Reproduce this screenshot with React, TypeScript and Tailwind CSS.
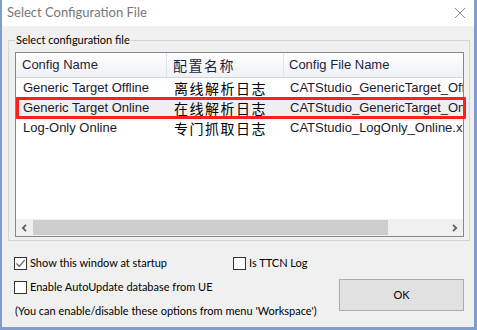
import React from "react"

const rows = [
  { name: "Generic Target Offline", cn: "离线解析日志", file: "CATStudio_GenericTarget_Offline.xml" },
  { name: "Generic Target Online", cn: "在线解析日志", file: "CATStudio_GenericTarget_Online.xml", marked: true },
  { name: "Log-Only Online", cn: "专门抓取日志", file: "CATStudio_LogOnly_Online.xml" },
]

const ui = { fontFamily: 'Lato, "Noto Sans", sans-serif' }
const list = { fontFamily: '"Liberation Sans", Arial, sans-serif' }
const cjk = { fontFamily: '"Noto Sans CJK SC", "Noto Sans", sans-serif' }

function CheckBox({ checked, label }: { checked?: boolean; label: string }) {
  return (
    <div className="flex items-center gap-[3px]">
      <div className="w-[13px] h-[13px] border border-[#333333] bg-white flex items-center justify-center">
        {checked && (
          <svg width="11" height="11" viewBox="0 0 11 11">
            <path d="M1.5 5.5 L4.2 8.3 L9.6 2.2" fill="none" stroke="#5a5a5a" strokeWidth="1.2" />
          </svg>
        )}
      </div>
      <span className="text-[11px] leading-[16px] text-black whitespace-nowrap" style={ui}>
        {label}
      </span>
    </div>
  )
}

function Arrow({ dir }: { dir: "l" | "r" }) {
  return (
    <div className="w-[17px] h-full flex items-center justify-center bg-[#f0f0f0]">
      <svg width="7" height="8" viewBox="0 0 7 8">
        <path
          d={dir === "l" ? "M5 0.8 L1.8 4 L5 7.2" : "M2 0.8 L5.2 4 L2 7.2"}
          fill="none"
          stroke="#606060"
          strokeWidth="1.8"
        />
      </svg>
    </div>
  )
}

export default function App() {
  return (
    <div className="w-[477px] h-[330px] flex flex-col border-l-2 border-r-[3px] border-b-[3px] border-[#7f9dd0] bg-[#f0f0f0]">
      {/* title bar */}
      <div className="h-[26px] shrink-0 bg-white flex items-center justify-between pl-[5px] pr-[8px]">
        <span className="text-[13px] text-[#777777]" style={ui}>
          Select Configuration File
        </span>
        <svg width="12" height="12" viewBox="0 0 12 12">
          <path d="M1 1 L11 11 M11 1 L1 11" stroke="#8a8a8a" strokeWidth="1" />
        </svg>
      </div>

      <div className="flex-1 flex flex-col">
        <fieldset className="mt-[6px] ml-[6px] mr-[4px] border border-[#d5d5d5] pl-[6px] pr-[5px] pb-[3px]">
          <legend className="px-[1px] text-[11px] leading-[16px] text-black" style={ui}>
            Select configuration file
          </legend>
          <div className="mt-[4px] h-[185px] border border-[#828790] bg-white flex flex-col" style={list}>
            <div className="h-[25px] shrink-0 flex border-b border-[#d5d5d5] bg-gradient-to-b from-white to-[#eef1f6] text-[13px] text-[#1e1e3c]">
              <div className="w-[151px] shrink-0 border-r border-[#dfe3ea] pl-[6px] flex items-center">Config Name</div>
              <div className="w-[117px] shrink-0 border-r border-[#dfe3ea] pl-[6px] flex items-center text-[14px] tracking-[1.5px]" style={cjk}>
                配置名称
              </div>
              <div className="flex-1 pl-[5px] flex items-center">Config File Name</div>
            </div>
            {rows.map((r) => (
              <div
                key={r.name}
                className={`relative h-[20px] shrink-0 flex items-center text-[13px] text-[#1a1a2e] ${r.marked ? "bg-[#efefef]" : ""}`}
              >
                <div className="w-[151px] shrink-0 pl-[7px] whitespace-nowrap overflow-hidden">{r.name}</div>
                <div className="w-[117px] shrink-0 pl-[7px] whitespace-nowrap overflow-hidden text-[14px] tracking-[1.5px] text-black" style={cjk}>
                  {r.cn}
                </div>
                <div className="w-[179px] shrink-0 pl-[6px] whitespace-nowrap overflow-hidden">{r.file}</div>
                {r.marked && (
                  <span className="absolute -top-[1px] -bottom-[1px] left-0 -right-[3px] border-[3px] border-[#ff1e1e] rounded-[1px]" />
                )}
              </div>
            ))}
            <div className="flex-1" />
            <div className="h-[17px] shrink-0 flex bg-[#f0f0f0]">
              <Arrow dir="l" />
              <div className="flex-1 flex items-center">
                <div className="w-[355px] h-[15px] bg-[#cdcdcd]" />
              </div>
              <Arrow dir="r" />
            </div>
          </div>
        </fieldset>

        <div className="pl-[12px] pt-[14px] flex flex-col">
          <div className="flex items-center">
            <div className="w-[219px]">
              <CheckBox checked label="Show this window at startup" />
            </div>
            <CheckBox label="Is TTCN Log" />
          </div>
          <div className="mt-[8px] flex justify-between pr-[10px]">
            <div className="flex flex-col">
              <CheckBox label="Enable AutoUpdate database from UE" />
              <div className="mt-[8px] pl-[1px] text-[11px] leading-[16px] text-black whitespace-nowrap" style={ui}>
                (You can enable/disable these options from menu 'Workspace')
              </div>
            </div>
            <button className="w-[125px] h-[32px] border border-[#adadad] bg-[#e1e1e1] text-[11px] text-black" style={ui}>
              OK
            </button>
          </div>
        </div>
      </div>
    </div>
  )
}
